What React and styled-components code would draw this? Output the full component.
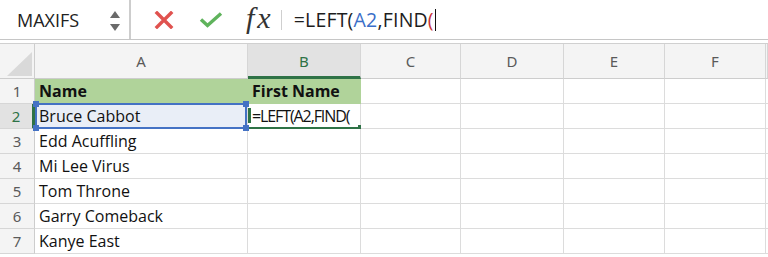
import React from 'react'
import styled, { createGlobalStyle, css } from 'styled-components'

const GlobalStyle = createGlobalStyle`
  html, body {
    margin: 0;
    padding: 0;
    background: #ffffff;
  }
  body {
    font-family: 'Open Sans', 'Liberation Sans', sans-serif;
    overflow: hidden;
  }
`

const COLS = '35px 213px 113px 100px 103px 101px 101px 1fr'
const GREEN = '#2e7246'
const BLUE = '#4472c4'
const HEAD_FILL = '#b0d39a'

const Page = styled.div`
  width: 768px;
  height: 257px;
  overflow: hidden;
  background: #fff;
`

const Toolbar = styled.div`
  display: flex;
  align-items: stretch;
  height: 39px;
  border-bottom: 1px solid #c6c6c6;
`

const NameBox = styled.div`
  width: 131px;
  box-sizing: border-box;
  display: flex;
  align-items: center;
  justify-content: space-between;
  padding: 0 9px 0 17px;
  border-right: 2px solid #cdcdcd;
  font-size: 18px;
  color: #222;
`

const Spinner = styled.div`
  display: flex;
  flex-direction: column;
  gap: 6px;
  padding-top: 2px;
`

const Tri = styled.span`
  width: 0;
  height: 0;
  border-left: 5px solid transparent;
  border-right: 5px solid transparent;
  ${({ down }) =>
    down
      ? css`border-top: 7px solid #6a6a6a;`
      : css`border-bottom: 7px solid #6a6a6a;`}
`

const Actions = styled.div`
  display: flex;
  align-items: center;
  padding-left: 23px;
`

const IconSlot = styled.div`
  width: ${({ w }) => w}px;
  display: flex;
  align-items: center;
`

const Fx = styled.span`
  font-family: 'Liberation Serif', 'DejaVu Serif', serif;
  font-style: italic;
  font-size: 30px;
  color: #333;
  line-height: 1;
  padding-bottom: 4px;
  letter-spacing: 3px;
`

const Divider = styled.div`
  width: 1px;
  height: 20px;
  background: #cfcfcf;
  margin: 0 12px 0 7px;
`

const Formula = styled.div`
  display: flex;
  align-items: center;
  font-size: 19.5px;
  color: #1d1d1d;
  white-space: pre;
  letter-spacing: 0.2px;
`

const Ref = styled.span`
  color: #3a6ec8;
`

const Paren = styled.span`
  color: #c8343a;
`

const Caret = styled.span`
  display: inline-block;
  width: 1px;
  height: 22px;
  background: #111;
  margin-left: 1px;
`

const Sheet = styled.div`
  margin-top: 3px;
  border-top: 1px solid #d0d0d0;
`

const Row = styled.div`
  display: grid;
  grid-template-columns: ${COLS};
  height: ${({ h }) => h}px;
`

const ColHead = styled.div`
  display: flex;
  align-items: center;
  justify-content: center;
  background: ${({ active }) => (active ? '#e2e2e2' : '#f4f4f4')};
  color: ${({ active }) => (active ? GREEN : '#5a5a5a')};
  font-family: 'Noto Sans', 'Liberation Sans', sans-serif;
  font-size: 15px;
  border-right: 1px solid #d6d6d6;
  border-bottom: ${({ active }) => (active ? `3px solid ${GREEN}` : '1px solid #cdcdcd')};
  box-sizing: border-box;
  padding-top: ${({ active }) => (active ? 2 : 0)}px;
`

const Corner = styled.div`
  position: relative;
  background: #f4f4f4;
  border-right: 1px solid #cdcdcd;
  border-bottom: 1px solid #cdcdcd;
  box-sizing: border-box;

  &::after {
    content: '';
    position: absolute;
    right: 2px;
    bottom: 2px;
    width: 0;
    height: 0;
    border-left: 25px solid transparent;
    border-bottom: 24px solid #d9d9d9;
  }
`

const RowHead = styled.div`
  display: flex;
  align-items: center;
  justify-content: center;
  background: ${({ active }) => (active ? '#e2e2e2' : '#f4f4f4')};
  color: ${({ active }) => (active ? GREEN : '#5a5a5a')};
  font-family: 'Noto Sans', 'Liberation Sans', sans-serif;
  font-size: 15px;
  border-right: ${({ active }) => (active ? `3px solid ${GREEN}` : '1px solid #cdcdcd')};
  border-bottom: 1px solid #d6d6d6;
  box-sizing: border-box;
`

const Cell = styled.div`
  position: relative;
  display: flex;
  align-items: center;
  padding-left: 4px;
  box-sizing: border-box;
  font-size: 16px;
  color: #111;
  white-space: nowrap;
  background: ${({ fill }) => fill || '#fff'};
  font-weight: ${({ bold }) => (bold ? 700 : 400)};
  letter-spacing: ${({ tight }) => (tight ? '-1.1px' : 'normal')};
  border-right: 1px solid ${({ fill }) => (fill === HEAD_FILL ? HEAD_FILL : '#dcdcdc')};
  border-bottom: 1px solid ${({ fill }) => (fill === HEAD_FILL ? HEAD_FILL : '#dcdcdc')};
  z-index: ${({ top }) => (top ? 2 : 1)};
`

const RefBox = styled.div`
  position: absolute;
  inset: -1px 0 -1px 0;
  border: 2px solid ${BLUE};
  pointer-events: none;
`

const Handle = styled.span`
  position: absolute;
  width: 6px;
  height: 6px;
  background: ${({ color }) => color};
  ${({ v }) => (v === 'top' ? 'top: -4px;' : 'bottom: -4px;')}
  ${({ h }) => (h === 'left' ? 'left: -4px;' : 'right: -4px;')}
`

const ActiveBox = styled.div`
  position: absolute;
  inset: 0 0 -1px 0;
  border-bottom: 2px solid ${GREEN};
  pointer-events: none;

  &::before {
    content: '';
    position: absolute;
    left: 0;
    top: 4px;
    width: 3px;
    height: 15px;
    background: ${GREEN};
  }
`

const CrossIcon = () => (
  <svg width="20" height="18" viewBox="0 0 20 18">
    <path d="M3 2 L17 16 M17 2 L3 16" stroke="#e0524f" strokeWidth="3.4" strokeLinecap="square" fill="none" />
  </svg>
)

const CheckIcon = () => (
  <svg width="24" height="16" viewBox="0 0 24 16">
    <path d="M2 7.5 L8.5 13.5 L22 1.5" stroke="#5fb35c" strokeWidth="3.4" fill="none" />
  </svg>
)

const names = ['Edd Acuffling', 'Mi Lee Virus', 'Tom Throne', 'Garry Comeback', 'Kanye East']
const letters = ['A', 'B', 'C', 'D', 'E', 'F', '']

const App = () => (
  <Page>
    <GlobalStyle />
    <Toolbar>
      <NameBox>
        MAXIFS
        <Spinner>
          <Tri />
          <Tri down />
        </Spinner>
      </NameBox>
      <Actions>
        <IconSlot w={45}>
          <CrossIcon />
        </IconSlot>
        <IconSlot w={47}>
          <CheckIcon />
        </IconSlot>
        <Fx>fx</Fx>
        <Divider />
      </Actions>
      <Formula>
        =LEFT(<Ref>A2</Ref>,FIND<Paren>(</Paren>
        <Caret />
      </Formula>
    </Toolbar>

    <Sheet>
      <Row h={35}>
        <Corner />
        {letters.map((l, i) => (
          <ColHead key={i} active={l === 'B'}>
            {l}
          </ColHead>
        ))}
      </Row>

      <Row h={25}>
        <RowHead>1</RowHead>
        <Cell fill={HEAD_FILL} bold>Name</Cell>
        <Cell fill={HEAD_FILL} bold>First Name</Cell>
        {[0, 1, 2, 3, 4].map((i) => (
          <Cell key={i} />
        ))}
      </Row>

      <Row h={25}>
        <RowHead active>2</RowHead>
        <Cell fill="#e9eef7" top>
          Bruce Cabbot
          <RefBox>
            <Handle color={BLUE} v="top" h="left" />
            <Handle color={BLUE} v="top" h="right" />
            <Handle color={BLUE} v="bottom" h="left" />
            <Handle color={BLUE} v="bottom" h="right" />
          </RefBox>
        </Cell>
        <Cell tight>
          =LEFT(A2,FIND(
          <ActiveBox>
            <Handle color={GREEN} v="bottom" h="right" />
          </ActiveBox>
        </Cell>
        {[0, 1, 2, 3, 4].map((i) => (
          <Cell key={i} />
        ))}
      </Row>

      {names.map((n, r) => (
        <Row h={25} key={n}>
          <RowHead>{r + 3}</RowHead>
          <Cell>{n}</Cell>
          {[0, 1, 2, 3, 4, 5].map((i) => (
            <Cell key={i} />
          ))}
        </Row>
      ))}
    </Sheet>
  </Page>
)

export default App
